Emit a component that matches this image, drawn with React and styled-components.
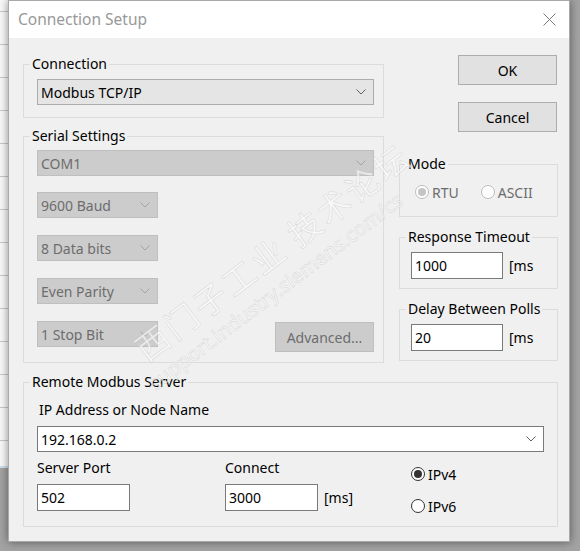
import styled, { createGlobalStyle } from "styled-components";

const GlobalStyle = createGlobalStyle`
  html, body {
    margin: 0;
    padding: 0;
    background: #a3a3a3;
  }
  body {
    font-family: "Noto Sans", "Open Sans", sans-serif;
    font-size: 14px;
    color: #000;
  }
`;

const Desktop = styled.div`
  width: 580px;
  height: 551px;
  display: flex;
  overflow: hidden;
  background: #a3a3a3;
`;

const BackWindow = styled.div`
  width: 8px;
  height: 466px;
  flex-shrink: 0;
  background: repeating-linear-gradient(
    to bottom,
    #fafafa 0px,
    #fafafa 11px,
    #c9c9c9 11px,
    #c9c9c9 12px,
    #fafafa 12px,
    #fafafa 33px
  );
  border-bottom: 2px solid #cfe0f0;
`;

const Dialog = styled.div`
  position: relative;
  width: 562px;
  height: 542px;
  box-sizing: border-box;
  flex-shrink: 0;
  display: flex;
  flex-direction: column;
  background: #f0f0f0;
  border: 1px solid #a9a9a9;
  box-shadow: 0 0 9px rgba(0, 0, 0, 0.45);
  overflow: hidden;
`;

const TitleBar = styled.div`
  height: 37px;
  flex-shrink: 0;
  display: flex;
  align-items: center;
  justify-content: space-between;
  background: #fff;
  padding: 0 13px 0 9px;
`;

const Title = styled.span`
  font-size: 15.5px;
  color: #999;
  margin-top: -1px;
`;

const Body = styled.div`
  flex: 1;
  padding: 17px 11px 0 14px;
  display: flex;
  flex-direction: column;
`;

const TopArea = styled.div`
  display: grid;
  grid-template-columns: 361px 159px;
  column-gap: 15px;
  align-items: start;
`;

const Column = styled.div`
  display: flex;
  flex-direction: column;
  gap: ${(p) => p.$gap || 0}px;
`;

const Group = styled.fieldset`
  margin: 0;
  min-width: 0;
  border: 1px solid #dcdcdc;
  padding: 0;
  ${(p) => (p.$spaced ? `margin-top: ${p.$spaced}px;` : "")}
`;

const GroupBody = styled.div`
  display: flex;
  flex-direction: column;
  align-items: flex-start;
  padding: ${(p) => p.$pad};
`;

const Legend = styled.legend`
  margin-left: 6px;
  padding: 0 2px;
  line-height: 18px;
  height: 18px;
  white-space: nowrap;
`;

const Select = styled.div`
  box-sizing: border-box;
  width: ${(p) => p.$w}px;
  height: 26px;
  display: flex;
  align-items: center;
  justify-content: space-between;
  padding: 0 7px 0 3px;
  border: 1px solid
    ${(p) => (p.$disabled ? "#bfbfbf" : p.$white ? "#7a7a7a" : "#acacac")};
  background: ${(p) => (p.$disabled ? "#cccccc" : p.$white ? "#fff" : "#e5e5e5")};
  color: ${(p) => (p.$disabled ? "#6d6d6d" : "#000")};
  margin-top: ${(p) => p.$mt || 0}px;
`;

const Button = styled.div`
  box-sizing: border-box;
  width: 99px;
  height: 30px;
  display: flex;
  align-items: center;
  justify-content: center;
  border: 1px solid ${(p) => (p.$disabled ? "#bfbfbf" : "#adadad")};
  background: ${(p) => (p.$disabled ? "#cccccc" : "#e1e1e1")};
  color: ${(p) => (p.$disabled ? "#6d6d6d" : "#000")};
  margin-top: ${(p) => p.$mt || 0}px;
  align-self: ${(p) => p.$align || "auto"};
  margin-right: ${(p) => p.$mr || 0}px;
`;

const SerialRow = styled.div`
  align-self: stretch;
  display: flex;
  justify-content: space-between;
  align-items: flex-start;
  margin-top: 17px;
`;

const RadioRow = styled.div`
  display: flex;
  align-items: center;
  gap: ${(p) => p.$gap || 0}px;
  height: 18px;
`;

const RadioLabel = styled.label`
  display: flex;
  align-items: center;
  gap: 3px;
  color: ${(p) => (p.$disabled ? "#6d6d6d" : "#000")};
  margin-top: ${(p) => p.$mt || 0}px;
  height: 18px;
`;

const Circle = styled.span`
  box-sizing: border-box;
  width: 14px;
  height: 14px;
  border-radius: 50%;
  border: 1px solid ${(p) => (p.$disabled ? "#bcbcbc" : "#333")};
  background: #fff;
  display: flex;
  align-items: center;
  justify-content: center;
  &::after {
    content: "";
    width: 8px;
    height: 8px;
    border-radius: 50%;
    background: ${(p) =>
      p.$checked ? (p.$disabled ? "#c4c4c4" : "#333") : "transparent"};
  }
`;

const InputRow = styled.div`
  display: flex;
  align-items: center;
  gap: 6px;
  margin-top: ${(p) => p.$mt || 0}px;
`;

const TextBox = styled.div`
  box-sizing: border-box;
  width: ${(p) => p.$w || 92}px;
  height: 27px;
  display: flex;
  align-items: center;
  padding-left: 3px;
  background: #fff;
  border: 1px solid #7a7a7a;
`;

const Unit = styled.span`
  color: #000;
`;

const FieldLabel = styled.div`
  line-height: 18px;
  height: 18px;
  padding-left: ${(p) => p.$pl || 0}px;
`;

const ServerGrid = styled.div`
  align-self: stretch;
  display: grid;
  grid-template-columns: 188px 186px 1fr;
  margin-top: 7px;
`;

const FieldCol = styled.div`
  display: flex;
  flex-direction: column;
`;

const Watermark = styled.div`
  position: absolute;
  left: ${(p) => p.$x}px;
  top: ${(p) => p.$y}px;
  transform: rotate(-37deg);
  transform-origin: left bottom;
  white-space: nowrap;
  font-size: ${(p) => p.$size}px;
  font-family: ${(p) =>
    p.$cjk
      ? '"Noto Sans CJK SC", "Noto Sans", sans-serif'
      : '"Noto Sans", sans-serif'};
  color: rgba(255, 255, 255, 0.6);
  -webkit-text-stroke: 0.6px rgba(175, 175, 175, 0.4);
  letter-spacing: ${(p) => p.$ls || 0}px;
  pointer-events: none;
`;

const Chevron = ({ disabled }) => (
  <svg width="10" height="6" viewBox="0 0 10 6">
    <polyline
      points="0.5,0.5 5,5 9.5,0.5"
      fill="none"
      stroke={disabled ? "#a4a4a4" : "#606060"}
      strokeWidth="1"
    />
  </svg>
);

const CloseIcon = () => (
  <svg width="13" height="13" viewBox="0 0 13 13">
    <path d="M0.5 0.5 L12.5 12.5 M12.5 0.5 L0.5 12.5" stroke="#7a7a7a" strokeWidth="1" />
  </svg>
);

const Combo = ({ w, disabled, white, mt, children }) => (
  <Select $w={w} $disabled={disabled} $white={white} $mt={mt}>
    <span>{children}</span>
    <Chevron disabled={disabled} />
  </Select>
);

const Radio = ({ label, checked, disabled, mt }) => (
  <RadioLabel $disabled={disabled} $mt={mt}>
    <Circle $checked={checked} $disabled={disabled} />
    {label}
  </RadioLabel>
);

export default function App() {
  return (
    <>
      <GlobalStyle />
      <Desktop>
        <BackWindow />
        <Dialog>
          <TitleBar>
            <Title>Connection Setup</Title>
            <CloseIcon />
          </TitleBar>
          <Body>
            <TopArea>
              <Column $gap={9}>
                <Group>
                  <Legend>Connection</Legend>
                  <GroupBody $pad="6px 9px 12px 13px">
                    <Combo w={337}>Modbus TCP/IP</Combo>
                  </GroupBody>
                </Group>
                <Group>
                  <Legend>Serial Settings</Legend>
                  <GroupBody $pad="5px 9px 10px 13px">
                    <Combo w={337} disabled>COM1</Combo>
                    <Combo w={121} disabled mt={16}>9600 Baud</Combo>
                    <Combo w={121} disabled mt={17}>8 Data bits</Combo>
                    <Combo w={121} disabled mt={17}>Even Parity</Combo>
                    <SerialRow>
                      <Combo w={121} disabled>1 Stop Bit</Combo>
                      <Button $disabled $mt={1}>Advanced...</Button>
                    </SerialRow>
                  </GroupBody>
                </Group>
              </Column>
              <Column>
                <Button $align="flex-end" $mr={1}>OK</Button>
                <Button $align="flex-end" $mr={1} $mt={17}>Cancel</Button>
                <Group $spaced={23}>
                  <Legend>Mode</Legend>
                  <GroupBody $pad="10px 8px 15px 15px">
                    <RadioRow $gap={22}>
                      <Radio label="RTU" checked disabled />
                      <Radio label="ASCII" disabled />
                    </RadioRow>
                  </GroupBody>
                </Group>
                <Group $spaced={11}>
                  <Legend>Response Timeout</Legend>
                  <GroupBody $pad="6px 8px 9px 11px">
                    <InputRow>
                      <TextBox>1000</TextBox>
                      <Unit>[ms</Unit>
                    </InputRow>
                  </GroupBody>
                </Group>
                <Group $spaced={11}>
                  <Legend>Delay Between Polls</Legend>
                  <GroupBody $pad="6px 8px 9px 11px">
                    <InputRow>
                      <TextBox>20</TextBox>
                      <Unit>[ms</Unit>
                    </InputRow>
                  </GroupBody>
                </Group>
              </Column>
            </TopArea>
            <Group $spaced={10}>
              <Legend>Remote Modbus Server</Legend>
              <GroupBody $pad="10px 13px 11px 13px">
                <FieldLabel $pl={2}>IP Address or Node Name</FieldLabel>
                <Combo w={507} white mt={7}>192.168.0.2</Combo>
                <ServerGrid>
                  <FieldCol>
                    <FieldLabel>Server Port</FieldLabel>
                    <InputRow $mt={7}>
                      <TextBox $w={93}>502</TextBox>
                    </InputRow>
                  </FieldCol>
                  <FieldCol>
                    <FieldLabel>Connect</FieldLabel>
                    <InputRow $mt={7}>
                      <TextBox $w={93}>3000</TextBox>
                      <Unit>[ms]</Unit>
                    </InputRow>
                  </FieldCol>
                  <FieldCol>
                    <Radio label="IPv4" checked mt={6} />
                    <Radio label="IPv6" mt={14} />
                  </FieldCol>
                </ServerGrid>
              </GroupBody>
            </Group>
          </Body>
          <Watermark $x={144} $y={322} $size={33} $cjk $ls={3}>
            西门子工业 技术论坛
          </Watermark>
          <Watermark $x={150} $y={368} $size={20}>
            support.industry.siemens.com/cs
          </Watermark>
        </Dialog>
      </Desktop>
    </>
  );
}
